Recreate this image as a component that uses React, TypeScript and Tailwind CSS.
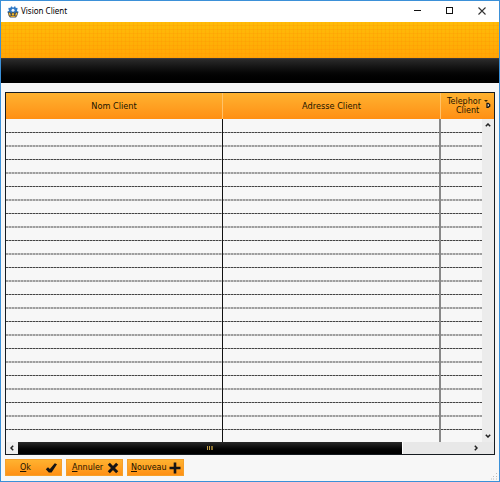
import React from "react";

const ROWS = Array.from({ length: 23 }, (_, i) => i);

function GearIcon() {
  return (
    <svg className="absolute left-[6px] top-[5px]" width="12" height="12" viewBox="0 0 12 12">
      <path d="M4 .6h1l.5.8h1.200l.5-.8h1.200l.4 1.400 1.400-.2.5 1.200-.8 1 .3 1.200h1.100v1.500L10 7.400H2L.6 6.700V5.300l1.200-.3.200-1-.8-1 .6-1.200 1.500.2z" fill="#2f78c4" />
      <circle cx="6" cy="4.300" r="1.500" fill="#f2f7fc" />
      <path d="M.8 6.300 2.800 5.800 4.300 7 6 5.800 7.700 7l1.600-1.200 1.900.6-.9 3.200L9 11.400H3L1.600 9.800z" fill="#4c5256" />
      <path d="M1.700 7.100 2.900 6.700l1 2.800H2.500zM4.800 8.200 6 6.600l1.200 1.600-.5 1.300H5.300zM8.100 9.500l1.100-2.800 1.200.4-.8 2.400z" fill="#f8bd2e" />
      <path d="M3.200 10h5.600l-.8 1H4z" fill="#dca328" />
    </svg>
  );
}

function Title() {
  return (
    <header className="relative h-[21px] shrink-0 bg-white">
      <GearIcon />
      <span className="absolute left-[20px] top-[4px] whitespace-nowrap font-['Noto_Sans',sans-serif] text-[8px] leading-[12px] text-black">
        Vision Client
      </span>
      <svg className="absolute right-0 top-0" width="99" height="21" viewBox="400 1 99 21" shapeRendering="crispEdges">
        <path d="M414 10.500h7" stroke="#111" />
        <rect x="446.500" y="7.500" width="6" height="6" fill="none" stroke="#111" />
        <path d="M478.500 7.500l7 7M485.500 7.500l-7 7" stroke="#333" strokeWidth="1.100" shapeRendering="auto" />
      </svg>
    </header>
  );
}

function TableHead() {
  return (
    <div className="flex h-[26px] shrink-0 bg-linear-to-b from-[#ffb22f] to-[#ff8f12] font-['DejaVu_Sans',sans-serif] text-[8.2px] text-[#201500]">
      <div className="flex w-[217px] items-center justify-center border-r border-[#ffc26a]">Nom Client</div>
      <div className="flex w-[218px] items-center justify-center border-r border-[#ffc26a]">Adresse Client</div>
      <div className="relative flex-1">
        <div className="absolute left-[6px] top-[4px] whitespace-nowrap text-[8px] leading-[9px]">Telephor</div>
        <div className="absolute left-[15px] top-[13px] text-[8px] leading-[9px]">Client</div>
        <svg className="absolute left-[42px] top-[6px]" width="9" height="11" viewBox="0 0 9 11">
          <path d="M1.500 1.500h3M3 2v1" stroke="#3a2500" strokeWidth="1" />
          <path d="M4 4.300v4h1.200l1.500-1.200V5.500L5.200 4.300z" fill="#e8e0d0" stroke="#151515" strokeWidth="1.300" />
        </svg>
      </div>
    </div>
  );
}

function Button({ first, rest, icon, pad }: { first: string; rest: string; icon: React.ReactNode; pad: string }) {
  return (
    <button className={"flex h-[17px] w-[57px] items-center border border-[#f5a02a] bg-linear-to-b from-[#ffb22f] to-[#ff9014] font-['DejaVu_Sans',sans-serif] text-[8px] leading-none text-[#201500] " + pad}>
      <span className="whitespace-nowrap"><u className="underline-offset-1">{first}</u>{rest}</span>
      <span className="ml-auto">{icon}</span>
    </button>
  );
}

export default function App() {
  return (
    <div className="relative flex h-[482px] w-[500px] flex-col overflow-hidden border border-[#3b90d8] bg-[#f7f7f7]">
      <Title />
      <div className="h-[36px] shrink-0 bg-[repeating-linear-gradient(90deg,#ff8c0038_0px_1px,transparent_1px_4px),repeating-linear-gradient(0deg,#ff8c0038_0px_1px,transparent_1px_4px),linear-gradient(#ffbc08,#ffa605)]" />
      <div className="h-[25px] shrink-0 border-t border-[#3a3a3a] bg-linear-to-b from-[#2b2b2b] to-black" />
      <main className="ml-[4px] mt-[9px] flex h-[363px] w-[490px] flex-col border border-[#161b20]">
        <TableHead />
        <div className="flex h-[323px] shrink-0">
          <div className="relative w-[476px] overflow-hidden">
            {ROWS.map((i) => (
              <div
                key={i}
                className={
                  i % 2 === 0
                    ? "mb-[12px] mt-[12px] h-px bg-[repeating-linear-gradient(90deg,#444_0px_2px,#999_2px_3px)] first:mt-[13px]"
                    : "h-[2px] bg-[repeating-linear-gradient(90deg,#888_0px_2px,#bbb_2px_3px)] opacity-80"
                }
              />
            ))}
            <div className="absolute left-[216px] top-0 h-full w-px bg-[#111]" />
            <div className="absolute left-[433px] top-0 h-full w-[2px] bg-[#888]" />
          </div>
          <div className="flex flex-1 flex-col items-center justify-between bg-[#ececec] py-[4px]">
            <svg width="6" height="4" viewBox="0 0 6 4"><path d="M.8 3.200 3 1l2.200 2.200" fill="none" stroke="#222" strokeWidth="1.500" /></svg>
            <svg width="6" height="4" viewBox="0 0 6 4"><path d="M.8 .8 3 3 5.200.8" fill="none" stroke="#222" strokeWidth="1.500" /></svg>
          </div>
        </div>
        <div className="flex h-[12px] shrink-0 bg-[#e8e8e8]">
          <div className="flex w-[12px] items-center justify-center bg-[#eee]">
            <svg width="4" height="6" viewBox="0 0 4 6"><path d="M3.200.8 1 3l2.200 2.200" fill="none" stroke="#222" strokeWidth="1.500" /></svg>
          </div>
          <div className="flex w-[384px] items-center justify-center gap-px bg-linear-to-b from-[#2b2b2b] to-black">
            <i className="h-[4px] w-px bg-[#c3a14d]" /><i className="h-[4px] w-px bg-[#c3a14d]" /><i className="h-[4px] w-[2px] bg-[#8b712f]" />
          </div>
          <div className="flex flex-1 items-center justify-end border-l border-white pr-[16px]">
            <svg width="4" height="6" viewBox="0 0 4 6"><path d="M.8.8 3 3 .8 5.200" fill="none" stroke="#222" strokeWidth="1.500" /></svg>
          </div>
        </div>
      </main>
      <footer className="ml-[4px] mt-[4px] flex gap-[4px]">
        <Button first="O" rest="k" pad="pl-[14px] pr-[3px]" icon={<svg width="13" height="12" viewBox="0 0 13 12"><path d="M.8 7.200 3 5.200l1.900 1.900L9.800 1.200l2.200 1.100L6.600 10.500H3.800z" fill="#151515" /></svg>} />
        <Button first="A" rest="nnuler" pad="pl-[5px] pr-[3px]" icon={<svg width="12" height="12" viewBox="0 0 12 12"><path d="M1.800 1.800l8.400 8.400M10.200 1.800l-8.400 8.400" stroke="#151515" strokeWidth="3" /></svg>} />
        <Button first="N" rest="ouveau" pad="pl-[3px] pr-[2px]" icon={<svg width="12" height="12" viewBox="0 0 12 12"><path d="M6 .5v11M.5 6h11" stroke="#151515" strokeWidth="2.600" /></svg>} />
      </footer>
      <svg className="absolute bottom-px right-px" width="7" height="7" viewBox="0 0 7 7" fill="#bbb">
        <path d="M5 0h1v1H5zM5 3h1v1H5zM2 3h1v1H2zM5 5.500h1v1H5zM2 5.500h1v1H2zM0 5.500h1v1H0z" />
      </svg>
    </div>
  );
}
